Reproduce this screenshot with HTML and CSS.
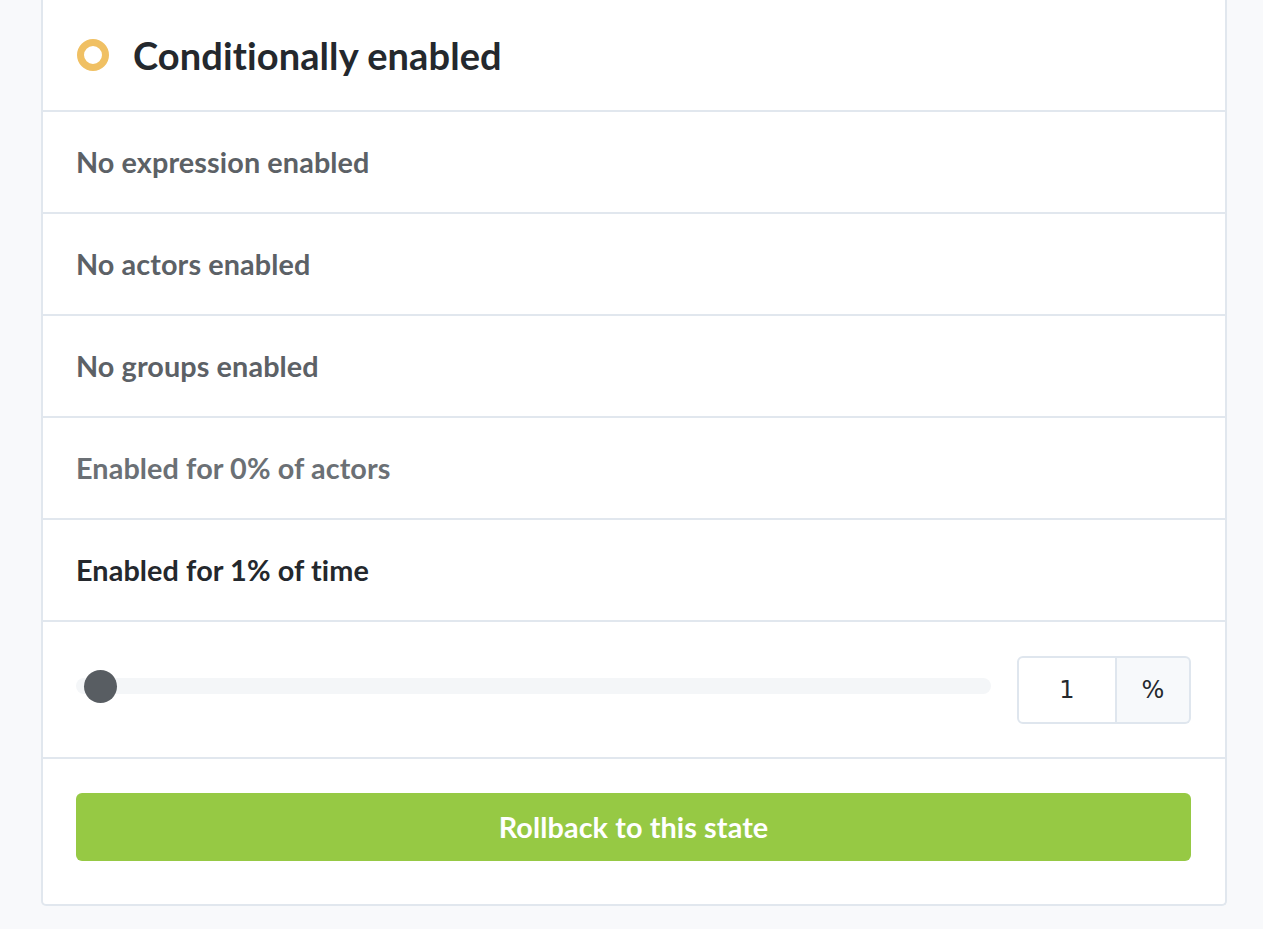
FILE: index.html
```html
<!DOCTYPE html>
<html lang="en">
<head>
  <meta charset="UTF-8" />
  <title>Feature state</title>
  <link rel="stylesheet" href="styles.css">
</head>
<body>
  <div class="card">
    <div class="card-header">
      <span class="status-ring"></span>
      <h2>Conditionally enabled</h2>
    </div>
    <ul class="gates">
      <li class="muted">No expression enabled</li>
      <li class="muted">No actors enabled</li>
      <li class="muted">No groups enabled</li>
      <li class="muted light">Enabled for 0% of actors</li>
      <li class="active">Enabled for 1% of time</li>
      <li class="slider-row">
        <div class="range">
          <div class="range-track"></div>
          <div class="range-thumb" style="left: 1%"></div>
        </div>
        <div class="input-group">
          <input type="text" value="1">
          <span class="addon">%</span>
        </div>
      </li>
      <li class="actions">
        <button type="button">Rollback to this state</button>
      </li>
    </ul>
  </div>
</body>
</html>
```

FILE: styles.css
```css
* { margin: 0; padding: 0; box-sizing: border-box; }
body { background: #f8f9fb; font-family: Lato, "Open Sans", sans-serif; color: #212529; }
.card { margin-left: 41px; width: 1186px; background: #fff; border: 2px solid #e1e7ee; border-top: none; border-radius: 0 0 5px 5px; }
.card-header { height: 110px; display: flex; align-items: center; padding-left: 34px; gap: 24px; }
.status-ring { width: 32px; height: 32px; border-radius: 50%; border: 7px solid #f0c063; margin-top: 0; }
.card-header h2 { font-size: 38px; font-weight: 700; color: #24282d; letter-spacing: 0.1px; }
.gates { list-style: none; }
.gates li { border-top: 2px solid #e1e7ee; height: 102px; display: flex; align-items: center; padding: 0 34px 0 33px; font-size: 28.8px; font-weight: 700; letter-spacing: 0.1px; }
.gates li.muted { color: #5c6166; }
.gates li.light { color: #6b7075; }
.gates li.active { color: #24282d; }
.gates li.slider-row { height: 137px; gap: 26px; }
.range { position: relative; flex: 1; height: 33px; display: flex; align-items: center; margin-bottom: 7px; }
.range-track { width: 100%; height: 16px; border-radius: 8px; background: #f4f6f8; }
.range-thumb { position: absolute; top: 0; width: 33px; height: 33px; border-radius: 50%; background: #585d62; margin-left: -1px; }
.input-group { display: flex; height: 68px; }
.input-group input { width: 100px; height: 68px; border: 2px solid #dfe6ee; border-radius: 6px 0 0 6px; text-align: center; font-family: "DejaVu Sans", sans-serif; font-size: 24px; color: #24282d; outline: none; }
.input-group .addon { width: 74px; border: 2px solid #dfe6ee; border-left: none; border-radius: 0 6px 6px 0; background: #f7f9fb; display: flex; align-items: center; justify-content: center; font-family: "DejaVu Sans", sans-serif; font-size: 24px; color: #24282d; font-weight: 400; }
.gates li.actions { height: 147px; padding-bottom: 10px; }
.actions button { width: 100%; height: 68px; border: none; border-radius: 6px; background: #96c944; color: #fff; font-family: Lato, sans-serif; font-size: 28.8px; font-weight: 700; letter-spacing: 0.1px; }
```
